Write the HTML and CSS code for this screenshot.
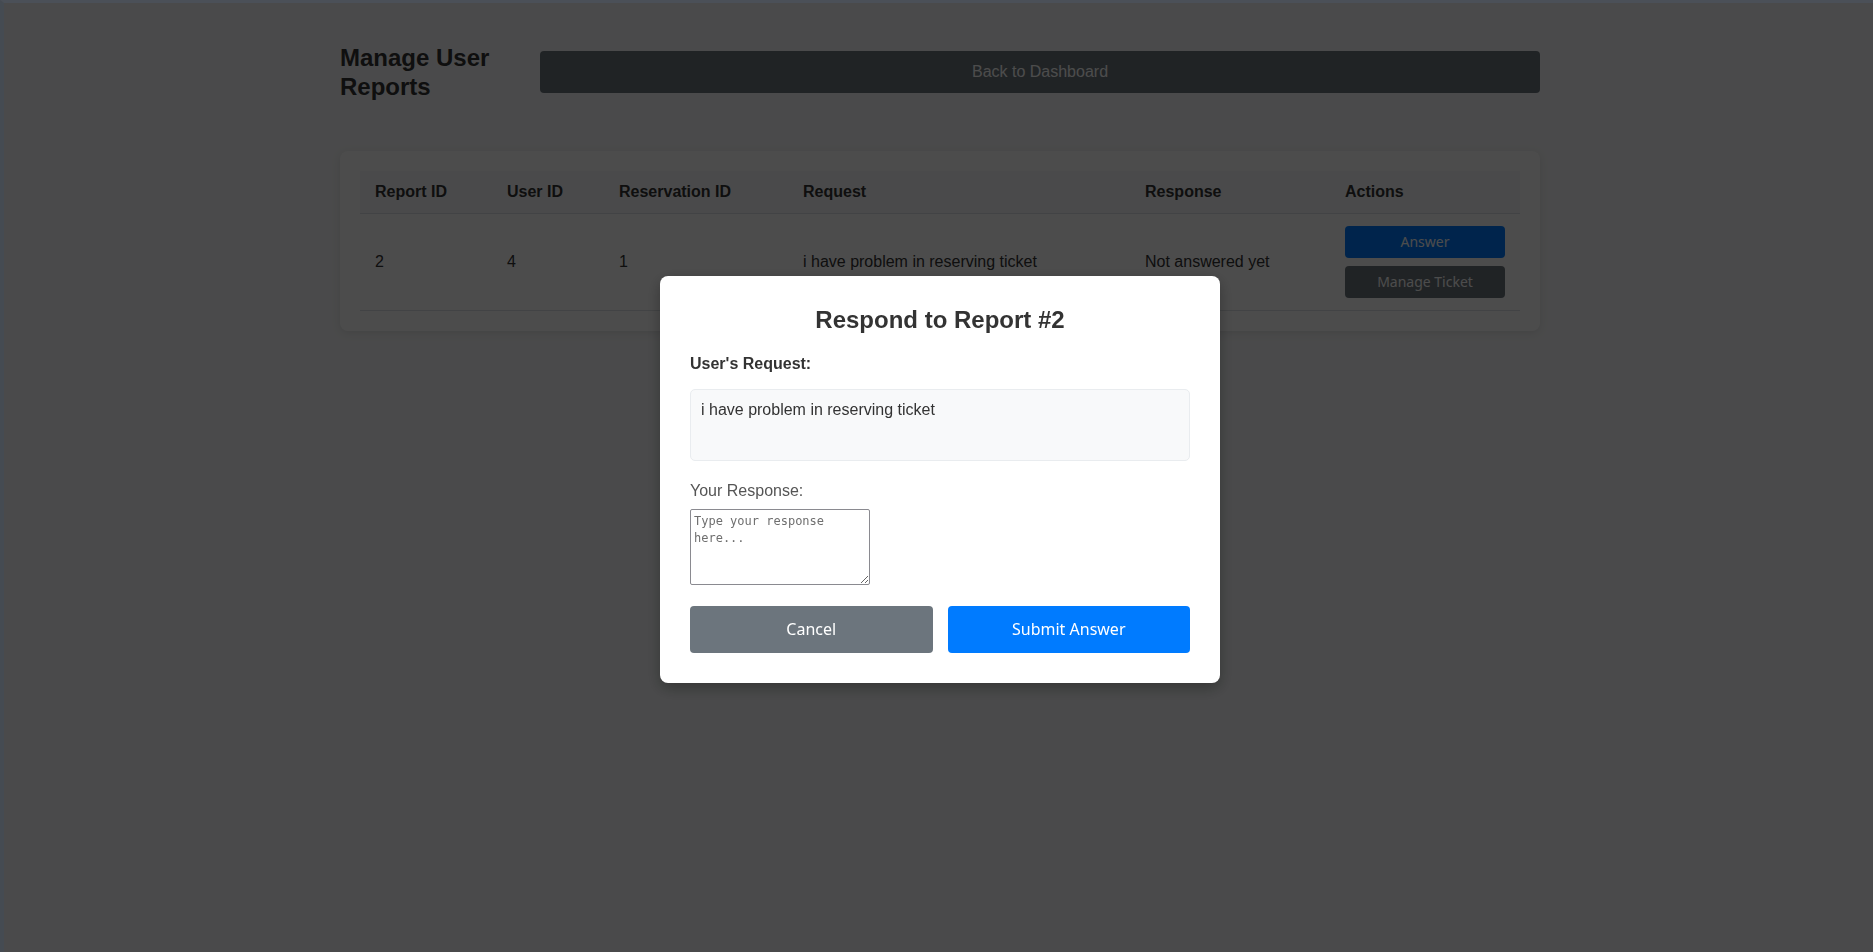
FILE: index.html
```html
<!DOCTYPE html>
<html lang="en">
<head>
<meta charset="utf-8">
<title>Manage User Reports</title>
<link rel="stylesheet" href="styles.css">
</head>
<body>
<div class="container">
  <header class="page-header">
    <h2 class="page-title">Manage User Reports</h2>
    <a class="back-btn" href="#">Back to Dashboard</a>
  </header>
  <div class="card">
    <table class="reports">
      <colgroup>
        <col class="c1"><col class="c2"><col class="c3"><col class="c4"><col class="c5"><col class="c6">
      </colgroup>
      <thead>
        <tr><th>Report ID</th><th>User ID</th><th>Reservation ID</th><th>Request</th><th>Response</th><th>Actions</th></tr>
      </thead>
      <tbody>
        <tr>
          <td>2</td><td>4</td><td>1</td><td>i have problem in reserving ticket</td><td>Not answered yet</td>
          <td><div class="actions"><button class="btn btn-primary">Answer</button><button class="btn btn-secondary">Manage Ticket</button></div></td>
        </tr>
      </tbody>
    </table>
  </div>
</div>
<div class="overlay">
  <div class="modal">
    <h2 class="modal-title">Respond to Report #2</h2>
    <p class="req-label"><strong>User's Request:</strong></p>
    <div class="req-box">i have problem in reserving ticket</div>
    <label class="resp-label" for="resp">Your Response:</label>
    <textarea id="resp" class="resp" placeholder="Type your response here..."></textarea>
    <div class="modal-actions">
      <button class="btn-lg cancel">Cancel</button>
      <button class="btn-lg submit">Submit Answer</button>
    </div>
  </div>
</div>
<div class="frame"></div>
</body>
</html>
```
FILE: styles.css
```css
html, body {
  margin: 0;
  height: 100%;
}
body {
  background: #f8f9fa;
  font-family: "Liberation Sans", Arial, sans-serif;
  color: #333;
  padding-left: 7px;
  box-sizing: border-box;
}
.container {
  width: 1200px;
  margin: 0 auto;
  padding-top: 43px;
}
.page-header {
  display: flex;
  align-items: center;
  gap: 20px;
  margin-bottom: 50px;
}
.page-title {
  flex: 0 0 180px;
  margin: 0;
  font-size: 24px;
  line-height: 29px;
  font-weight: bold;
  color: #333;
}
.back-btn {
  flex: 1;
  display: block;
  height: 42px;
  line-height: 42px;
  text-align: center;
  background: #6c757d;
  color: #fff;
  text-decoration: none;
  border-radius: 4px;
  font-size: 16px;
}
.card {
  background: #fff;
  border-radius: 8px;
  padding: 20px;
  box-shadow: 0 2px 10px rgba(0,0,0,0.1);
}
.reports {
  width: 100%;
  border-collapse: collapse;
  table-layout: fixed;
}
.c1 { width: 132px; }
.c2 { width: 112px; }
.c3 { width: 184px; }
.c4 { width: 342px; }
.c5 { width: 200px; }
.c6 { width: 190px; }
.reports th, .reports td {
  padding: 12px 15px;
  text-align: left;
  border-bottom: 1px solid #dee2e6;
  font-size: 16px;
  vertical-align: middle;
}
.reports th {
  background: #f8f9fa;
  font-weight: bold;
  color: #333;
}
.actions {
  display: flex;
  flex-direction: column;
  gap: 8px;
}
.btn {
  display: block;
  width: 100%;
  border: none;
  border-radius: 4px;
  padding: 6px 10px;
  font-family: "Noto Sans", sans-serif;
  font-size: 14px;
  line-height: 20px;
  color: #fff;
}
.btn-primary { background: #007bff; }
.btn-secondary { background: #6c757d; }

.overlay {
  position: fixed;
  inset: 0;
  padding: 7px 0 0 7px;
  background: rgba(0,0,0,0.7);
  display: flex;
  align-items: center;
  justify-content: center;
}
.modal {
  width: 500px;
  padding: 30px;
  background: #fff;
  border-radius: 8px;
  box-shadow: 0 5px 15px rgba(0,0,0,0.3);
}
.modal-title {
  margin: 0 0 21px;
  text-align: center;
  font-size: 24px;
  color: #333;
}
.req-label {
  margin: 0 0 16px;
  font-size: 16px;
  color: #333;
}
.req-box {
  background: #f8f9fa;
  border: 1px solid #e9ecef;
  border-radius: 5px;
  padding: 11px 10px 9px;
  min-height: 50px;
  margin-bottom: 21px;
  font-size: 16px;
  color: #333;
}
.resp-label {
  display: block;
  margin-bottom: 9px;
  font-size: 16px;
  color: #555;
}
.resp {
  display: block;
  box-sizing: border-box;
  width: 180px;
  height: 76px;
  border: 1px solid #8a8a90;
  border-radius: 2px;
  padding: 3px 3px;
  font-family: "DejaVu Sans Mono", "Liberation Mono", monospace;
  font-size: 12px;
  line-height: 17px;
  margin: 0;
}
.resp::placeholder {
  color: #6f6f6f;
}
.modal-actions {
  display: flex;
  gap: 15px;
  margin-top: 21px;
}
.btn-lg {
  flex: 1;
  border: none;
  border-radius: 4px;
  padding: 12px;
  font-family: "Noto Sans", sans-serif;
  font-size: 16px;
  line-height: 23px;
  color: #fff;
}
.cancel { background: #6c757d; }
.submit { background: #007bff; }

.frame {
  position: fixed;
  inset: 0;
  border-top: 3px solid #4b5058;
  border-left: 4px solid #454b52;
  pointer-events: none;
}
```
